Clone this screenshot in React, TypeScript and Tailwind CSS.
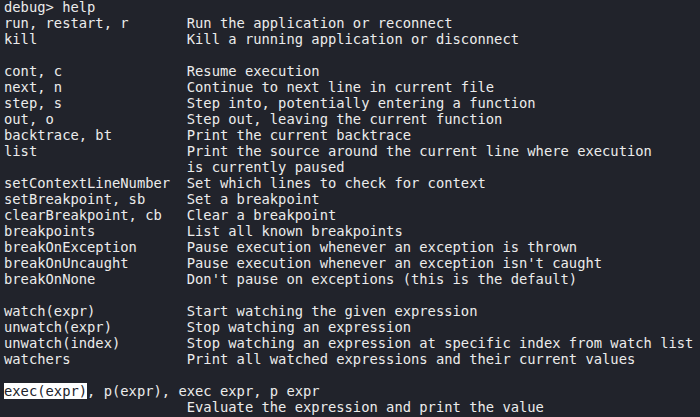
type Row = [string, string] | [string] | [];

const rows: Row[] = [
  ["debug> help"],
  ["run, restart, r", "Run the application or reconnect"],
  ["kill", "Kill a running application or disconnect"],
  [],
  ["cont, c", "Resume execution"],
  ["next, n", "Continue to next line in current file"],
  ["step, s", "Step into, potentially entering a function"],
  ["out, o", "Step out, leaving the current function"],
  ["backtrace, bt", "Print the current backtrace"],
  ["list", "Print the source around the current line where execution"],
  ["", "is currently paused"],
  ["setContextLineNumber", "Set which lines to check for context"],
  ["setBreakpoint, sb", "Set a breakpoint"],
  ["clearBreakpoint, cb", "Clear a breakpoint"],
  ["breakpoints", "List all known breakpoints"],
  ["breakOnException", "Pause execution whenever an exception is thrown"],
  ["breakOnUncaught", "Pause execution whenever an exception isn't caught"],
  ["breakOnNone", "Don't pause on exceptions (this is the default)"],
  [],
  ["watch(expr)", "Start watching the given expression"],
  ["unwatch(expr)", "Stop watching an expression"],
  ["unwatch(index)", "Stop watching an expression at specific index from watch list"],
  ["watchers", "Print all watched expressions and their current values"],
  [],
];

export default function App() {
  return (
    <div className="w-[700px] h-[417px] overflow-hidden bg-[#21232b] text-[#ececec] font-['DejaVu_Sans_Mono',monospace] text-[13.8px] leading-[16px]">
      <div className="-mt-px pl-[4px] whitespace-pre">
        {rows.map((row, i) => (
          <div key={i} className="flex h-4">
            {row.length === 2 ? (
              <>
                <span className="w-[22ch] shrink-0">{row[0]}</span>
                <span>{row[1]}</span>
              </>
            ) : (
              <span>{row[0] ?? ""}</span>
            )}
          </div>
        ))}
        {/* selected command on the prompt line */}
        <div className="flex h-4">
          <span className="bg-white text-[#21232b]">exec(expr)</span>
          <span>, p(expr), exec expr, p expr</span>
        </div>
        <div className="flex h-4">
          <span className="w-[22ch] shrink-0"></span>
          <span>Evaluate the expression and print the value</span>
        </div>
      </div>
    </div>
  );
}
